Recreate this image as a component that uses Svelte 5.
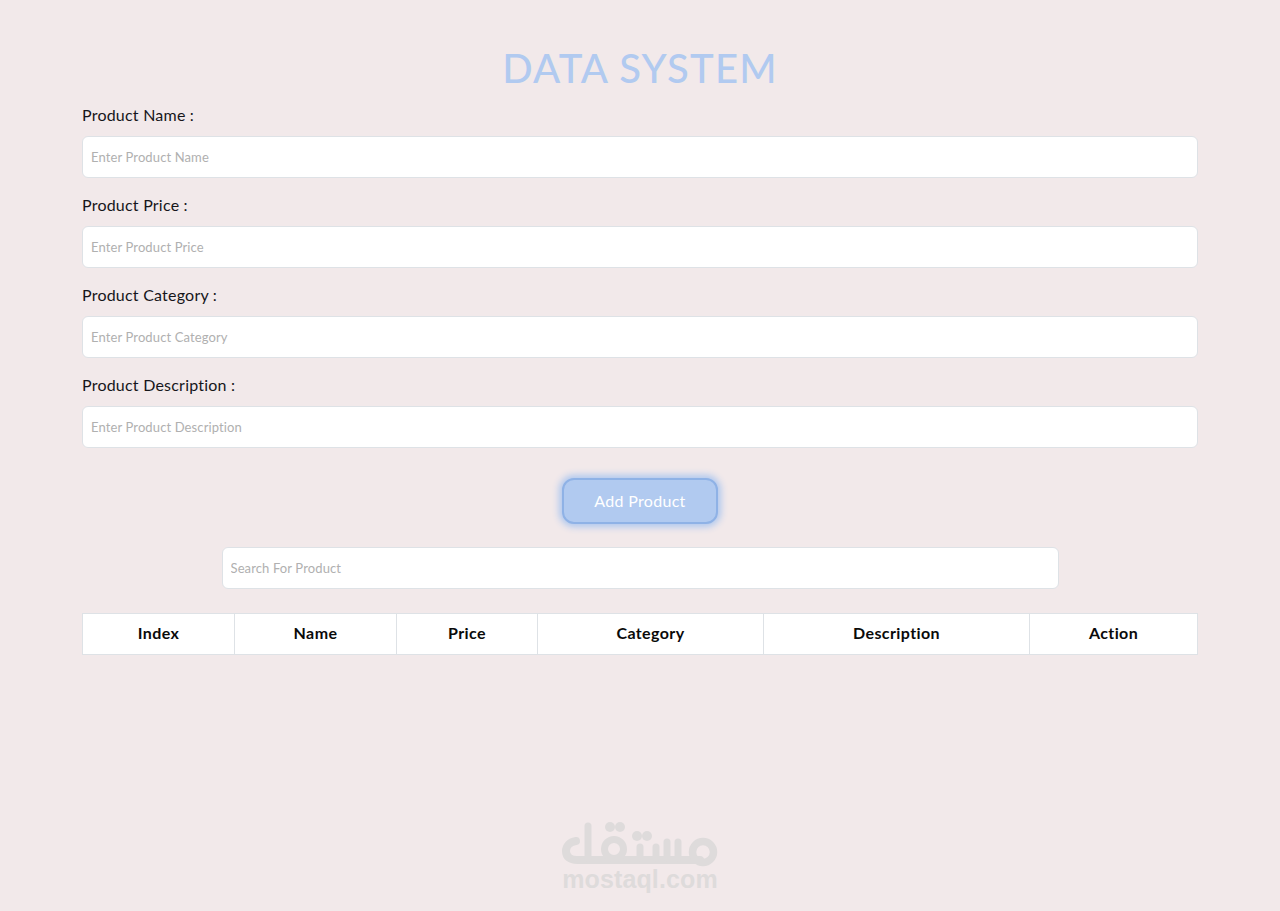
<script>
  const fields = ['Name', 'Price', 'Category', 'Description'];
  const cols = ['Index', 'Name', 'Price', 'Category', 'Description', 'Action'];
</script>

<div class="page">
  <h1>DATA SYSTEM</h1>
  <form class="form">
    {#each fields as f}
      <div class="field">
        <label for={f}>Product {f} :</label>
        <input id={f} type="text" placeholder={`Enter Product ${f}`} />
      </div>
    {/each}
    <button type="button" class="add">Add Product</button>
    <input class="search" type="text" placeholder="Search For Product" />
  </form>
  <table>
    <thead>
      <tr>
        {#each cols as c}<th>{c}</th>{/each}
      </tr>
    </thead>
  </table>
  <div class="mark">
    <svg width="160" height="50" viewBox="560 820 160 50" fill="none" stroke="#dedbdb" stroke-width="7" stroke-linecap="round" stroke-linejoin="round">
      <path d="M576 841C569 842 566 847 566 851C566 857 570 860 577 860H700" stroke-width="8"/>
      <path d="M588 826V858" />
      <circle cx="614" cy="849" r="9.5"/>
      <path d="M640 847V858M656 847V858M667 842V858M678 842V858"/>
      <circle cx="703" cy="852" r="10.5" stroke-width="7.5"/>
      <g fill="#dedbdb" stroke="none">
        <circle cx="610" cy="827" r="5"/><circle cx="620" cy="827" r="5"/>
        <circle cx="637" cy="836" r="5"/><circle cx="647" cy="836" r="5"/>
      </g>
    </svg>
    <span>mostaql.com</span>
  </div>
</div>

<style>
  :global(body) { margin: 0; background: #f2e9ea; }
  .page { position: relative; height: 911px; padding: 46px 82px 0 82px; box-sizing: border-box; font-family: Lato, sans-serif; overflow: hidden; }
  h1 { margin: 0 0 14px; text-align: center; color: #b1caf0; font-size: 40px; line-height: 44px; font-weight: 500; letter-spacing: 1.2px; }
  .form { display: flex; flex-direction: column; align-items: center; }
  .field { width: 100%; height: 90px; display: flex; flex-direction: column; }
  label { font-size: 16px; line-height: 24px; height: 33px; margin-top: -1px; letter-spacing: 0.22px; color: #16161a; }
  input { box-sizing: border-box; width: 100%; height: 42px; padding: 0 8px; background: #fff; border: 1px solid #dee2e6; border-radius: 6px; font: 13px Lato, sans-serif; letter-spacing: 0.12px; outline: none; }
  input::placeholder { color: #b0b0b0; }
  .add { width: 156px; height: 46px; margin-top: 14px; padding: 0 0 2px; background: #b1caf0; color: #fff; border: 2px solid #8fb2e6; border-radius: 12px; box-shadow: 0 0 7px 3px #adc7ef; font: 16px Lato, sans-serif; letter-spacing: 0.3px; }
  .search { width: 837px; margin-top: 23px; }
  table { width: 1116px; margin-top: 24px; border-collapse: collapse; table-layout: fixed; background: #fff; }
  th { height: 41px; padding: 0 0 3px; box-sizing: border-box; border: 1px solid #dee2e6; font-size: 16px; font-weight: 700; color: #0a0a0a; letter-spacing: 0.4px; }
  th:nth-child(1) { width: 152px; }
  th:nth-child(2) { width: 162px; }
  th:nth-child(3) { width: 141px; }
  th:nth-child(4) { width: 226px; }
  th:nth-child(5) { width: 266px; }
  .mark { position: absolute; left: 560px; top: 820px; width: 160px; display: flex; flex-direction: column; align-items: center; }
  .mark svg { display: block; }
  .mark span { font: 700 25px/24px "Liberation Sans", sans-serif; letter-spacing: 0.12px; color: #dedbdb; margin-top: -3px; }
</style>
